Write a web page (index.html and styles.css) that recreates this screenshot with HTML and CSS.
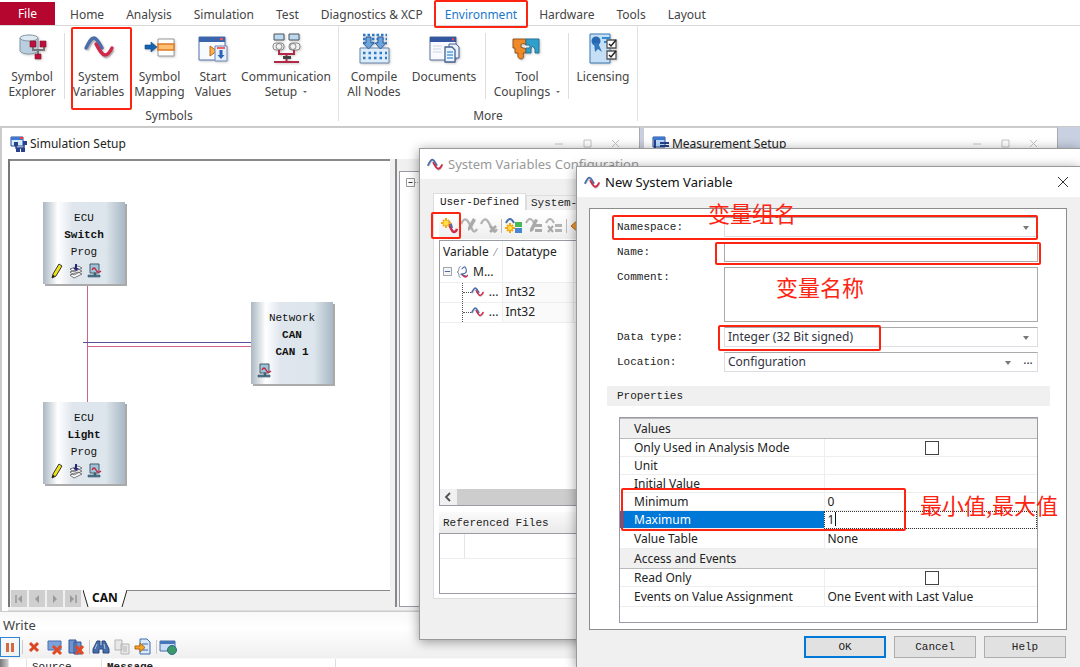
FILE: index.html
```html
<!DOCTYPE html>
<html lang="en">
<head>
<meta charset="utf-8">
<title>New System Variable</title>
<link rel="stylesheet" href="styles.css">
</head>
<body>
<svg class="sprite" aria-hidden="true">
  <symbol id="wave" viewBox="0 0 30 24">
    <path d="M3 15C6 9 8 5 11 5C14 5 16 10 19 14M13 11C17 17 19 22 22 22C25 22 27 18 29 15" fill="none" stroke="#000" stroke-opacity=".18" stroke-width="3.5"/>
    <path d="M2 13C5 7 7 3 10 3C13 3 15 8 18 13" fill="none" stroke="#4a6ea9" stroke-width="3.4" stroke-linecap="round"/>
    <path d="M12 9C16 16 18 20 21 20C24 20 26 17 28 13" fill="none" stroke="#cf2848" stroke-width="3.4" stroke-linecap="round"/>
  </symbol>
  <symbol id="wave-grey" viewBox="0 0 18 18">
    <path d="M1 7C4 1 6 1 9 6L12 12Q14 17 17 12" fill="none" stroke="#b4b4b4" stroke-width="2.4"/>
  </symbol>
  <symbol id="pc" viewBox="0 0 16 16">
    <path d="M3 1h9v9H3z" fill="#9cc4d8" stroke="#455b68"/>
    <path d="M7 10h2v2H7zM1 12h12v2H1z" fill="#4e7f9c" stroke="#3b4d5a" stroke-width=".6"/>
    <path d="M5 7q2-4 4 0t5 1" fill="none" stroke="#cf2040" stroke-width="1.3"/>
  </symbol>
  <symbol id="pencil" viewBox="0 0 16 16">
    <path d="M4 11L10 1l3 2-6 10-4 2z" fill="#f2e21c" stroke="#333" stroke-width="1"/>
    <path d="M3 15l1-3 2 1z" fill="#111"/>
  </symbol>
  <symbol id="stack" viewBox="0 0 16 16">
    <path d="M2 12l8-3 4 2-8 4zM2 9l8-3 4 2-8 4zM2 6l8-3 4 2-8 4z" fill="#fff" stroke="#555" stroke-width=".8"/>
    <path d="M7 1h2v4h2L8 8 5 5h2z" fill="#25257e"/>
  </symbol>
</svg>

<nav class="tabs">
  <button class="tab file">File</button>
  <button class="tab">Home</button>
  <button class="tab">Analysis</button>
  <button class="tab">Simulation</button>
  <button class="tab">Test</button>
  <button class="tab">Diagnostics &amp; XCP</button>
  <button class="tab current marked">Environment</button>
  <button class="tab">Hardware</button>
  <button class="tab">Tools</button>
  <button class="tab">Layout</button>
</nav>

<header class="ribbon">
  <section class="group">
    <div class="items">
      <button class="tool w64">
        <svg class="big" viewBox="0 0 32 32"><path d="M4 5v13c2 4 15 4 18 0V5" fill="#b9cede" stroke="#8296a5"/><ellipse cx="13" cy="5" rx="9" ry="3" fill="#dde8f0" stroke="#8296a5"/><path d="M17 13v4h11v-4M22 17v6" fill="none" stroke="#777" stroke-width="2"/><path d="M14 8h6v6h-6zM24 8h6v6h-6zM19 21h6v5h-6z" fill="#b9123d" stroke="#8b0d2c" stroke-width=".6"/></svg>
        <span>Symbol<br>Explorer</span></button>
      <i class="rule"></i>
      <button class="tool w66 boxed"><svg class="big" viewBox="0 0 32 32"><use href="#wave" x="0" y="2" width="32" height="24"/></svg><span>System<br>Variables</span></button>
      <button class="tool w55">
        <svg class="big" viewBox="0 0 32 32"><path d="M14 6h16v17H14z" fill="#fff" stroke="#999"/><path d="M14 11h16v6H14z" fill="#ffc074" stroke="#e07a20" stroke-width="1.5"/><path d="M1 12h6V9l6 5-6 5v-3H1z" fill="#1664b0" stroke="#0f4b8c" stroke-width=".6"/></svg>
        <span>Symbol<br>Mapping</span></button>
      <button class="tool w52">
        <svg class="big" viewBox="0 0 32 32"><path d="M2 4h26v23H2z" fill="#f7faff" stroke="#5273aa"/><path d="M2 4h26v5H2z" fill="#3a65ad"/><path d="M23 6h3" stroke="#e55" stroke-width="2"/><path d="M13 13l7 5-7 5z" fill="#ffae4a" stroke="#b66c14"/><path d="M18 13h12v15H18z" fill="#e7effc" stroke="#6b87b6"/><path d="M20 15h8" stroke="#e33" stroke-width="1.5"/><path d="M22.500 17h3v5h2l-3.500 4-3.500-4h2z" fill="#2c65b5"/></svg>
        <span>Start<br>Values</span></button>
      <button class="tool w94">
        <svg class="big" viewBox="0 0 32 32"><g fill="#bcd9ef" stroke="#4d565e"><path d="M4 1h10v6H4zM19 1h10v6H19z"/></g><g fill="#f2f2f2" stroke="#888"><rect x="3" y="10" width="11" height="7" rx="3"/><rect x="19" y="10" width="11" height="7" rx="3"/><circle cx="9" cy="13.500" r="3"/><circle cx="23" cy="13.500" r="3"/></g><path d="M9 17v4h15v-4M16.500 21v8M4 29h25" fill="none" stroke="#b22948" stroke-width="2"/><path d="M13 23h8v3h-8z" fill="#444"/></svg>
        <span>Communication<br>Setup <b class="caret"></b></span></button>
    </div>
    <h2>Symbols</h2>
  </section>
  <section class="group">
    <div class="items">
      <button class="tool w70">
        <svg class="big" viewBox="0 0 32 32"><path d="M2 15h29v15H2z" fill="#dcecfa" stroke="#6683a8"/><path d="M5 2h24M5 6h24M5 10h24" stroke="#2c79c8" stroke-width="2.500" stroke-dasharray="2.500 2"/><path d="M5 20h24M5 25h24" stroke="#2c79c8" stroke-width="2.500" stroke-dasharray="2.500 3"/><path d="M8 4h5v6h3l-5.500 6L5 10h3zM20 4h5v6h3l-5.500 6L17 10h3z" fill="#6ea4dc" stroke="#305f9c"/></svg>
        <span>Compile<br>All Nodes</span></button>
      <button class="tool w70">
        <svg class="big" viewBox="0 0 32 32"><path d="M2 4h26v23H2z" fill="#f8faff" stroke="#5b6f9c"/><path d="M2 4h26v5H2z" fill="#32579f"/><path d="M24 6.500h2" stroke="#f44" stroke-width="2"/><path d="M5 13h9M5 16h8M5 19h9" stroke="#d0d4dc"/><path d="M21 11h7l3 3v11H21z" fill="#e8f1fc" stroke="#465f8f"/><path d="M17 14h7l3 3v12H17z" fill="#eaf4ff" stroke="#465f8f" stroke-width="1.300"/><path d="M19 19h6M19 22h6M19 25h6" stroke="#58a0d8" stroke-width="1.500"/></svg>
        <span>Documents</span></button>
      <i class="rule gap"></i>
      <button class="tool w82">
        <svg class="big" viewBox="0 0 32 32"><path d="M2 6h13v6q-4-3-5 0t2 3q3 0 3 1v4h-3q2 6-2 6t-3-6H4v-5H2z" fill="#f08a28" stroke="#8f5420"/><path d="M15 6h13v14h-4v-4q-3-5-4 0v4h-5v-5q4 1 4-1.500T15 12z" fill="#2fa0cc" stroke="#277290"/></svg>
        <span>Tool<br>Couplings <b class="caret"></b></span></button>
      <i class="rule"></i>
      <button class="tool w68">
        <svg class="big" viewBox="0 0 32 32"><path d="M3 1h20v29H3z" fill="#c4dff6" stroke="#3b79b4"/><path d="M15 5h8M17 9h6" stroke="#2f8ad8" stroke-width="2"/><circle cx="9" cy="8" r="4.500" fill="#2768b2"/><path d="M7 10l1 9 3-3 4 3-4-9z" fill="#3278bd"/><path d="M20 7h9v8h-9zM20 18h9v8h-9z" fill="#fff" stroke="#555" stroke-width="1.300"/><path d="M22 11l2 2 5-6M22 22l2 2 5-6" fill="none" stroke="#222" stroke-width="1.500"/></svg>
        <span>Licensing</span></button>
    </div>
    <h2>More</h2>
  </section>
</header>

<main class="workspace">
  <section class="pane sim">
    <div class="bar">
      <svg class="i18" viewBox="0 0 18 18"><path d="M1 2h12v9H1z" fill="#d5ecff" stroke="#26489a"/><path d="M1 2h12v3H1z" fill="#3f7ad0"/><path d="M10 3h3" stroke="#f33" stroke-width="2"/><path d="M4 7h4v4H4zM13 6h4v4h-4zM6 13h4v4H6zM11 13h4v4h-4z" fill="#27418c"/><path d="M6 11v2h8v-3" fill="none" stroke="#27418c" stroke-width="1.500"/></svg>
      <h1>Simulation Setup</h1>
      <svg class="winctl" viewBox="0 0 66 10"><path d="M0 5h8M29 1h7v7h-7zM57 1l7 7M64 1l-7 7" fill="none" stroke="#c4c4c4"/></svg>
    </div>
    <div class="split">
      <div class="left">
        <div class="canvas">
          <svg class="wires" width="300" height="300"><path d="M77.500 120V242M78 185.500H244" fill="none" stroke="#cf6485"/><path d="M73 181.500H244" stroke="#55519c"/></svg>
          <article class="node n1"><p>ECU</p><p><b>Switch</b></p><p>Prog</p><div><svg><use href="#pencil"/></svg><svg><use href="#stack"/></svg><svg><use href="#pc"/></svg></div></article>
          <article class="node n2"><p>Network</p><p><b>CAN</b></p><p><b>CAN 1</b></p><div><svg><use href="#pc"/></svg></div></article>
          <article class="node n3"><p>ECU</p><p><b>Light</b></p><p>Prog</p><div><svg><use href="#pencil"/></svg><svg><use href="#stack"/></svg><svg><use href="#pc"/></svg></div></article>
        </div>
        <div class="sheets">
          <button aria-label="First"><svg viewBox="0 0 16 16"><path d="M5 4v8" stroke="#999" stroke-width="1.500"/><path d="M11 4v8L7 8z" fill="#999"/></svg></button>
          <button aria-label="Previous"><svg viewBox="0 0 16 16"><path d="M10 4v8L6 8z" fill="#999"/></svg></button>
          <button aria-label="Next"><svg viewBox="0 0 16 16"><path d="M6 4v8l4-4z" fill="#999"/></svg></button>
          <button aria-label="Last"><svg viewBox="0 0 16 16"><path d="M11 4v8" stroke="#999" stroke-width="1.500"/><path d="M5 4v8l4-4z" fill="#999"/></svg></button>
          <div class="sheet"><svg viewBox="0 0 6 18"><path d="M0 0h6v17H5z" fill="#fff"/><path d="M0 0l5 17" stroke="#222"/></svg><span>CAN</span><svg viewBox="0 0 6 18"><path d="M0 0h6L1 17H0z" fill="#fff"/><path d="M6 0L1 17" stroke="#222"/></svg></div>
          <i class="edge"></i>
        </div>
      </div>
      <div class="tree"><div class="treebox"><svg viewBox="0 0 20 10"><path d="M.5.5h8v8h-8z" fill="#fff" stroke="#999"/><path d="M2.500 4.500h4" stroke="#333"/><path d="M9 4.500h11" stroke="#999" stroke-dasharray="1 1"/></svg></div></div>
    </div>
  </section>
  <section class="pane meas">
    <div class="bar">
      <svg class="i18" viewBox="0 0 18 18"><path d="M1 2h12v10H1z" fill="#b9dcfa" stroke="#26489a"/><path d="M1 2h12v3H1z" fill="#3f7ad0"/><path d="M3 5v9h6" fill="none" stroke="#27418c" stroke-width="2"/><path d="M8 7h9v2H8zM8 10h9v2H8zM8 13h9v2H8z" fill="#27418c"/></svg>
      <h1>Measurement Setup</h1>
      <svg class="winctl" viewBox="0 0 66 10"><path d="M0 5h8M29 1h7v7h-7zM57 1l7 7M64 1l-7 7" fill="none" stroke="#c4c4c4"/></svg>
    </div>
  </section>
</main>

<section class="write">
  <h2>Write</h2>
  <div class="wbar">
    <button class="on" aria-label="Pause"><svg viewBox="0 0 18 18"><path d="M5 5h3v9H5zM10 5h3v9h-3z" fill="#d36a43"/></svg></button>
    <i></i>
    <button aria-label="Clear"><svg viewBox="0 0 18 18"><path d="M5 5l8 8M13 5l-8 8" stroke="#dc4722" stroke-width="3"/></svg></button>
    <button aria-label="Clear window"><svg viewBox="0 0 18 18"><path d="M2 3h13v9H2z" fill="#7ca2dc" stroke="#486fae"/><path d="M7 8l8 8M15 8l-8 8" stroke="#e34a24" stroke-width="3"/></svg></button>
    <button aria-label="Clear all"><svg viewBox="0 0 18 18"><path d="M2 2h7v13H2zM7 4h7v12H7z" fill="#6d95d2" stroke="#34558f"/><path d="M9 8l7 8M16 8l-7 8" stroke="#e34a24" stroke-width="3"/></svg></button>
    <i></i>
    <button aria-label="Find"><svg viewBox="0 0 18 18"><path d="M5 3h3v5h2V3h3l4 8v4h-6v-4H7v4H1v-4z" fill="#456da8" stroke="#2a4980"/><path d="M3 11l2-5M13 11l-1-5" stroke="#a7c6ea"/></svg></button>
    <button aria-label="Copy"><svg viewBox="0 0 18 18"><path d="M2 2h7v10H2zM8 6h8v10H8z" fill="#e8e8e8" stroke="#b5b5b5"/><path d="M10 9h4M10 11h4M10 13h4" stroke="#b5b5b5"/></svg></button>
    <button aria-label="Export"><svg viewBox="0 0 18 18"><path d="M6 1h7l3 3v12H6z" fill="#d8e9fc" stroke="#426bab"/><path d="M8 6h6M8 12h6" stroke="#426bab"/><path d="M1 8h5V5l5 4.500L6 14v-3H1z" fill="#f5a52a" stroke="#ac6717"/></svg></button>
    <i></i>
    <button aria-label="Web window"><svg viewBox="0 0 18 18"><path d="M1 3h15v10H1z" fill="#c8dcf6" stroke="#4a6fa5"/><path d="M1 3h15v3H1z" fill="#4676b8"/><circle cx="13" cy="12" r="4.500" fill="#3c9a69" stroke="#2c6a86"/></svg></button>
  </div>
  <div class="whead"><span class="grip"></span><span></span><span class="src">Source</span><span class="msg">Message</span></div>
</section>

<section class="dialog config">
  <div class="title"><svg><use href="#wave"/></svg><h1>System Variables Configuration</h1></div>
  <div class="cbody">
    <div class="ctabs"><button class="sel">User-Defined</button><button>System-Defined</button></div>
    <div class="page">
      <div class="cbar">
        <button class="marked" aria-label="New variable"><svg viewBox="0 0 18 18"><path d="M7 6C10 6 11 15 14 15q2 0 3-3" fill="none" stroke="#cf2848" stroke-width="2.400"/><path d="M9 5q2 1 3 6" fill="none" stroke="#4a6ea9" stroke-width="2"/><path d="M6 1v10M1 6h10M3 3l6 6M9 3l-6 6" stroke="#f3a712" stroke-width="2"/><circle cx="6" cy="6" r="2.500" fill="#ffe04b"/></svg></button>
        <button aria-label="Edit variable"><svg viewBox="0 0 18 18"><use href="#wave-grey"/><path d="M8 10L13 1l3 2-5 9-3 2z" fill="#aaa"/></svg></button>
        <button aria-label="Delete variable"><svg viewBox="0 0 18 18"><use href="#wave-grey"/><path d="M10 9l6 6M16 9l-6 6" stroke="#a8a8a8" stroke-width="2.500"/></svg></button>
        <i></i>
        <button aria-label="New group"><svg viewBox="0 0 18 18"><path d="M1 6q4-8 8 0" fill="none" stroke="#4a6ea9" stroke-width="2"/><path d="M5 6v10M0 11h10M2 8l6 6M8 8l-6 6" stroke="#f3a712" stroke-width="2"/><circle cx="5" cy="11" r="2" fill="#ffe04b"/><path d="M10 5h7v5h-7z" fill="#46b856"/><path d="M10 11h7v5h-7z" fill="#4586ce"/></svg></button>
        <button aria-label="Edit group"><svg viewBox="0 0 18 18"><path d="M1 6q4-8 8 0" fill="none" stroke="#b4b4b4" stroke-width="2"/><path d="M10 7h7v3h-7zM10 12h7v3h-7zM5 12l5-10 3 1-5 11-3 1z" fill="#aaa"/></svg></button>
        <button aria-label="Delete group"><svg viewBox="0 0 18 18"><path d="M1 6q4-8 8 0" fill="none" stroke="#b4b4b4" stroke-width="2"/><path d="M10 7h7v3h-7zM10 12h7v3h-7z" fill="#b2b2b2"/><path d="M3 9l5 6M8 9l-5 6" stroke="#a8a8a8" stroke-width="2"/></svg></button>
        <i></i>
        <button aria-label="Import"><svg viewBox="0 0 18 18"><path d="M1 9l7-6v12z" fill="#f29a34" stroke="#a56a2a"/></svg></button>
      </div>
      <div class="list">
        <table class="vars">
          <tr><th class="v">Variable <small>⁄</small></th><th class="d">Datatype</th><th></th></tr>
          <tr><td><div class="cell"><svg class="exp" viewBox="0 0 10 10"><path d="M.5.5h9v9h-9z" fill="#f4f4f4" stroke="#8f979f"/><path d="M2 5h6" stroke="#3c5a9a"/></svg><svg class="i12" viewBox="0 0 12 14"><path d="M4 1Q2 1 2 4T0 7q2 0 2 3t2 3" fill="none" stroke="#7c8490"/><path d="M5 4q4-5 5 0T6 9t5 3" fill="none" stroke="#4a6ea9" stroke-width="1.300"/><path d="M6 10q3 5 6 0" fill="none" stroke="#cf2848" stroke-width="1.500"/></svg>M...</div></td><td></td><td></td></tr>
          <tr class="leaf"><td><div class="cell sub"><svg class="i14"><use href="#wave"/></svg>...</div></td><td>Int32</td><td>-</td></tr>
          <tr class="leaf"><td><div class="cell sub"><svg class="i14"><use href="#wave"/></svg>...</div></td><td>Int32</td><td>-</td></tr>
        </table>
        <div class="hscroll"><button aria-label="Scroll left"><svg viewBox="0 0 10 10"><path d="M7 1L3 5l4 4" fill="none" stroke="#505050" stroke-width="1.800"/></svg></button><i></i></div>
      </div>
      <h2>Referenced Files</h2>
      <div class="files"><div></div></div>
    </div>
  </div>
</section>

<section class="dialog newvar">
  <div class="title"><svg><use href="#wave"/></svg><h1>New System Variable</h1><button class="close" aria-label="Close"><svg viewBox="0 0 12 12"><path d="M1 1l10 10M11 1L1 11" stroke="#333"/></svg></button></div>
  <form class="panel">
    <div class="form">
      <label for="ns">Namespace:</label><span class="combo"><select id="ns"><option></option></select></span>
      <label for="nm">Name:</label><input id="nm" type="text">
      <label for="cm">Comment:</label><textarea id="cm"></textarea>
      <label for="dt">Data type:</label><span class="combo"><select id="dt"><option>Integer (32 Bit signed)</option></select></span>
      <label for="lc">Location:</label><span class="combo more"><select id="lc"><option>Configuration</option></select><button type="button">...</button></span>
    </div>
    <h2>Properties</h2>
    <div class="props">
      <table>
        <colgroup><col class="name"><col></colgroup>
        <tr class="sec"><th colspan="2">Values</th></tr>
        <tr><th><label for="am">Only Used in Analysis Mode</label></th><td class="c"><input id="am" type="checkbox"></td></tr>
        <tr><th>Unit</th><td></td></tr>
        <tr><th>Initial Value</th><td></td></tr>
        <tr><th>Minimum</th><td>0</td></tr>
        <tr class="active"><th><label for="mx">Maximum</label></th><td><input id="mx" type="text" value="1"><i class="cursor"></i></td></tr>
        <tr class="tall"><th>Value Table</th><td>None</td></tr>
        <tr class="sec"><th colspan="2">Access and Events</th></tr>
        <tr><th><label for="ro">Read Only</label></th><td class="c"><input id="ro" type="checkbox"></td></tr>
        <tr class="tall"><th>Events on Value Assignment</th><td>One Event with Last Value</td></tr>
      </table>
    </div>
  </form>
  <div class="actions"><button class="ok">OK</button><button>Cancel</button><button>Help</button></div>

  <div class="frame f-ns"></div>
  <div class="frame f-name"></div>
  <div class="frame f-type"></div>
  <div class="frame f-range"></div>
  <p class="note t-ns" lang="zh">变量组名</p>
  <p class="note t-name" lang="zh">变量名称</p>
  <p class="note t-range" lang="zh">最小值,最大值</p>
</section>
</body>
</html>
```
FILE: styles.css
```css
* { box-sizing: border-box; margin: 0; padding: 0; }
body {
  display: flex; flex-direction: column; height: 100vh; overflow: hidden; position: relative;
  background: #fff; color: #222; font: 12px/16px "Noto Sans", "Noto Sans CJK SC", sans-serif;
}
button, input, select, textarea { font: inherit; color: inherit; border: 0; background: none; border-radius: 0; }
h1, h2, th { font-weight: normal; font-size: inherit; text-align: left; }
svg { display: block; flex: none; }
.sprite { position: absolute; width: 0; height: 0; }

/* ribbon */
.tabs { display: flex; flex: none; height: 26px; border-bottom: 1px solid #d8d8d8; white-space: nowrap; }
.tab { padding: 5px 11px 0; color: #444; }
.file { width: 55px; margin: 2px 4px 0 0; padding: 0; background: #b4062f; color: #fff; }
.current { color: #1979ca; }
.marked { position: relative; }
.marked::after { content: ""; position: absolute; inset: 0 0 -3px; border: 2px solid #fd2412; border-radius: 2px; }
.ribbon { display: flex; flex: none; height: 101px; border-bottom: 1px solid #c9c9c9; }
.group { border-right: 1px solid #e2e2e2; margin-bottom: 5px; }
.items { display: flex; height: 82px; padding-top: 7px; }
.group h2 { text-align: center; color: #444; }
.tool { display: flex; flex-direction: column; align-items: center; gap: 4px; position: relative; color: #444; line-height: 15px; white-space: nowrap; }
.big { width: 32px; height: 32px; filter: drop-shadow(1px 1px 1px #0003); }
.rule { width: 1px; height: 66px; background: #dedede; }
.rule.gap { margin-left: 6px; }
.caret { display: inline-block; margin: 0 0 3px 3px; border: 2px solid transparent; border-top-color: #666; border-bottom: 0; }
.boxed::after { content: ""; position: absolute; inset: -6px 0 -2px 6px; border: 2px solid #fd2412; border-radius: 2px; }
.w52 { width: 52px; } .w55 { width: 55px; } .w64 { width: 64px; } .w66 { width: 67px; }
.w68 { width: 68px; } .w70 { width: 70px; } .w82 { width: 82px; } .w94 { width: 99px; padding-right: 5px; }

/* docked windows */
.workspace { flex: 1; min-height: 0; display: flex; background: #c8d0e1; gap: 3px; padding-right: 22px; }
.pane { display: flex; flex-direction: column; background: #fff; border: 1px solid #ccc; border-right-color: #aaa; }
.sim { flex: 640; border-left: 2px solid #ccc; }
.meas { flex: 415; }
.bar { display: flex; align-items: center; height: 31px; padding: 0 18px 0 8px; gap: 2px; }
.i18 { width: 18px; height: 18px; }
.winctl { width: 66px; height: 10px; margin-left: auto; }
.split { flex: 1; display: flex; min-height: 0; background: #f0f0f0; margin-left: 6px; padding-bottom: 3px; border-bottom: 1px solid #ddd; }
.left { width: 389px; display: flex; flex-direction: column; border-left: 2px solid #777; border-right: 2px solid #888; }
.canvas { flex: 1; position: relative; background: #fff; border-top: 2px solid #8a8a8a; margin-right: 5px; }
.wires { position: absolute; left: 0; top: 0; }
.node {
  position: absolute; width: 82px; height: 82px; padding-top: 8px; text-align: center; color: #111;
  font: 11px/17px "Liberation Mono", monospace; box-shadow: 2px 2px 0 #aaa;
  background: linear-gradient(90deg, #aab7c2, #fff 18%, #dfe6ed 36%, #dde6ec 76%, #a9b7c5);
}
.node div { display: flex; gap: 3px; padding: 2px 6px; }
.node svg { width: 16px; height: 16px; }
.n1 { left: 33px; top: 41px; } .n2 { left: 241px; top: 141px; } .n3 { left: 33px; top: 241px; }
.sheets { display: flex; height: 17px; gap: 2px; padding-left: 1px; }
.sheets button { width: 16px; height: 17px; background: #cfcfcf; }
.sheet { display: flex; font-weight: bold; color: #111; }
.sheet span { background: #fff; padding: 0 3px; }
.sheet svg { width: 6px; height: 18px; }
.edge { flex: 1; border-top: 2px solid #888; margin: -1px 5px 0 -2px; }
.tree { flex: 1; padding: 12px 0 0 2px; background: #f0f0f0; }
.treebox { height: 100%; border: 1px solid #9a9aa4; background: #fff; padding: 6px; }
.treebox svg { width: 20px; height: 10px; }

/* write window */
.write { flex: none; height: 55px; background: linear-gradient(#f8f8f8, #fff 16px, #f0f0f0 46px, #fff 47px); overflow: hidden; }
.write h2 { font-size: 13px; line-height: 16px; padding: 5px 3px 3px; color: #444; }
.wbar { display: flex; height: 22px; align-items: center; }
.wbar button { width: 21px; height: 20px; padding: 1px; }
.wbar svg { width: 18px; height: 18px; }
.wbar .on { width: 20px; border: 1px solid #2b86d9; padding: 0; }
.wbar i { width: 1px; height: 14px; background: #ccc; margin: 0 1px 0 2px; }
.whead { display: flex; width: 336px; border-right: 1px solid #ddd; height: 20px; margin-top: 1px; font: 11px/16px "Liberation Mono", monospace; }
.whead span { width: 18px; border-right: 1px solid #e2e2e2; }
.whead .grip { width: 9px; background: linear-gradient(90deg, #777, #ccc); }
.whead .src { width: 75px; padding-left: 5px; }
.whead .msg { width: auto; border: 0; padding-left: 5px; font-weight: bold; }

/* dialogs */
.dialog { position: absolute; background: #f0f0f0; border: 1px solid #999; border-right: 0; box-shadow: 0 2px 11px #0006; }
.title { display: flex; align-items: center; height: 30px; padding-left: 7px; gap: 5px; background: #fff; font: 13px/16px "Noto Sans", sans-serif; color: #111; }
.title svg { width: 16px; height: 15px; }
.config { left: 419px; right: 0; top: 148px; }
.config .title { color: #999; }
.cbody { padding: 14px 14px 40px 13px; font: 11px/16px "Liberation Mono", monospace; }
.ctabs { display: flex; align-items: flex-end; height: 17px; }
.ctabs button { height: 15px; padding: 0 4px; border: 1px solid #ddd; border-bottom: 0; line-height: 14px; }
.ctabs .sel { height: 17px; background: #fff; width: 93px; }
.page { background: #fff; border: 1px solid #ddd; border-top: 0; padding: 3px 5px 4px; }
.cbar { display: flex; align-items: center; height: 26px; background: linear-gradient(#fff, #eee); margin-bottom: 1px; }
.cbar button { width: 20px; height: 20px; padding: 1px; }
.cbar svg { width: 18px; height: 18px; }
.cbar .marked::after { inset: -4px -2px -3px -8px; }
.cbar i { width: 1px; height: 14px; background: #bbb; margin: 0 2px; }
.list { height: 266px; border: 1px solid #999ba5; border-right: 0; display: flex; flex-direction: column; justify-content: space-between; font: 12px/18px "Noto Sans", sans-serif; }
.vars { width: 100%; table-layout: fixed; border-collapse: collapse; color: #222; }
.vars tr { height: 20px; }
.vars tr:first-child { height: 21px; }
.vars th, .vars td { padding: 0 3px; border-right: 1px solid #eee; white-space: nowrap; }
.vars .v { width: 62px; } .vars .d { width: 71px; }
.vars small { color: #888; margin-left: 3px; }
.leaf td { border-top: 1px solid #eee; border-bottom: 1px solid #eee; }
.leaf td:nth-child(2) { background: #fafafa; }
.cell { display: flex; align-items: center; gap: 5px; }
.sub { height: 19px; margin-left: 19px; border-left: 1px dotted #555; }
.sub::before { content: ""; width: 8px; margin-right: -5px; border-top: 1px dotted #555; }
.exp { width: 9px; height: 9px; } .i12 { width: 11px; height: 14px; } .i14 { width: 13px; height: 12px; }
.hscroll { display: flex; height: 16px; background: #f0f0f0; }
.hscroll button { width: 17px; padding: 3px; }
.hscroll i { flex: 1; background: #cdcdcd; }
.hscroll svg { width: 10px; height: 10px; }
.page h2 { margin-top: 6px; padding: 3px 4px 2px; background: linear-gradient(#fafafa, #eaeaea); }
.files { height: 61px; border: 1px solid #999ba5; border-right: 0; }
.files div { height: 25px; border-bottom: 1px solid #eee; background: linear-gradient(90deg, transparent 24px, #e5e5e5 24px, #e5e5e5 25px, transparent 25px); }

.newvar { left: 576px; right: 0; top: 166px; bottom: -1px; font: 11px/16px "Liberation Mono", monospace; }
.close { margin: 0 11px 0 auto; }
.close svg { width: 12px; height: 12px; }
.panel { margin: 11px 13px 0 12px; border: 1px solid #8c8c8c; background: #fff; padding: 8px 16px 6px 17px; }
.form { display: grid; grid-template-columns: 107px 1fr; grid-template-rows: 20px 20px 55px 20px 20px; row-gap: 5px; padding: 0 12px 0 10px; line-height: 20px; }
.form input, .form textarea { width: 100%; border: 1px solid #aaa; background: #fff; resize: none; display: block; }
.combo { display: flex; position: relative; border: 1px solid #dcdce2; border-top-color: #aaa; font: 12px/18px "Noto Sans", sans-serif; color: #334; }
.combo select { flex: 1; appearance: none; padding-left: 3px; }
.combo::after { content: ""; position: absolute; right: 8px; top: 8px; border: 3px solid transparent; border-top: 4px solid #777; border-bottom: 0; }
.more::after { right: 26px; }
.more button { width: 18px; line-height: 10px; margin-bottom: 5px; }
.panel h2 { margin: 14px 0 11px; padding: 2px 10px; background: #f0f0f0; }
.props { margin: 0 12px; border: 1px solid #999ba5; padding-bottom: 15px; }
.props table { width: 100%; border-collapse: collapse; table-layout: fixed; font: 12px/17px "Noto Sans", sans-serif; }
.props .name { width: 204px; }
.props tr { height: 18px; }
.props .tall { height: 20px; }
.props .sec { height: 20px; background: #f0f0f0; }
.props th { padding-left: 14px; border-bottom: 1px solid #eee; }
.props td { padding-left: 3px; border-bottom: 1px solid #eee; border-left: 1px solid #eee; }
.props .sec th { border-top: 1px solid #bbb; border-bottom: 1px solid #bbb; line-height: 18px; }
.props .c { text-align: center; }
.props [type=checkbox] { appearance: none; display: block; width: 14px; height: 14px; margin: 0 auto; border: 1px solid #444; background: #fff; }
.active th { background: #0078d7; color: #fff; }
.active td { outline: 1px dotted #333; outline-offset: -1px; }
.active input { width: 7px; height: 16px; display: inline-block; vertical-align: top; }
.cursor { display: inline-block; width: 1px; height: 14px; background: #111; vertical-align: top; margin-top: 1px; }
.actions { display: flex; justify-content: flex-end; gap: 8px; padding: 6px 14px; }
.actions button { width: 82px; height: 22px; background: #e1e1e1; border: 1px solid #adadad; }
.actions .ok { border: 2px solid #0078d7; }

/* review marks laid over the dialog */
.frame { position: absolute; border: 2px solid #fd2412; border-radius: 2px; pointer-events: none; }
.f-ns { left: 35px; right: 42px; top: 48px; height: 25px; }
.f-name { left: 138px; right: 39px; top: 75px; height: 23px; }
.f-type { left: 141px; width: 163px; top: 158px; height: 26px; }
.f-range { left: 44px; width: 285px; top: 321px; height: 43px; }
.note { position: absolute; font: 22px/26px "Noto Sans CJK SC", sans-serif; color: #fd2412; white-space: nowrap; }
.t-ns { left: 131px; top: 32px; }
.t-name { left: 199px; top: 106px; }
.t-range { left: 343px; top: 324px; }
```
